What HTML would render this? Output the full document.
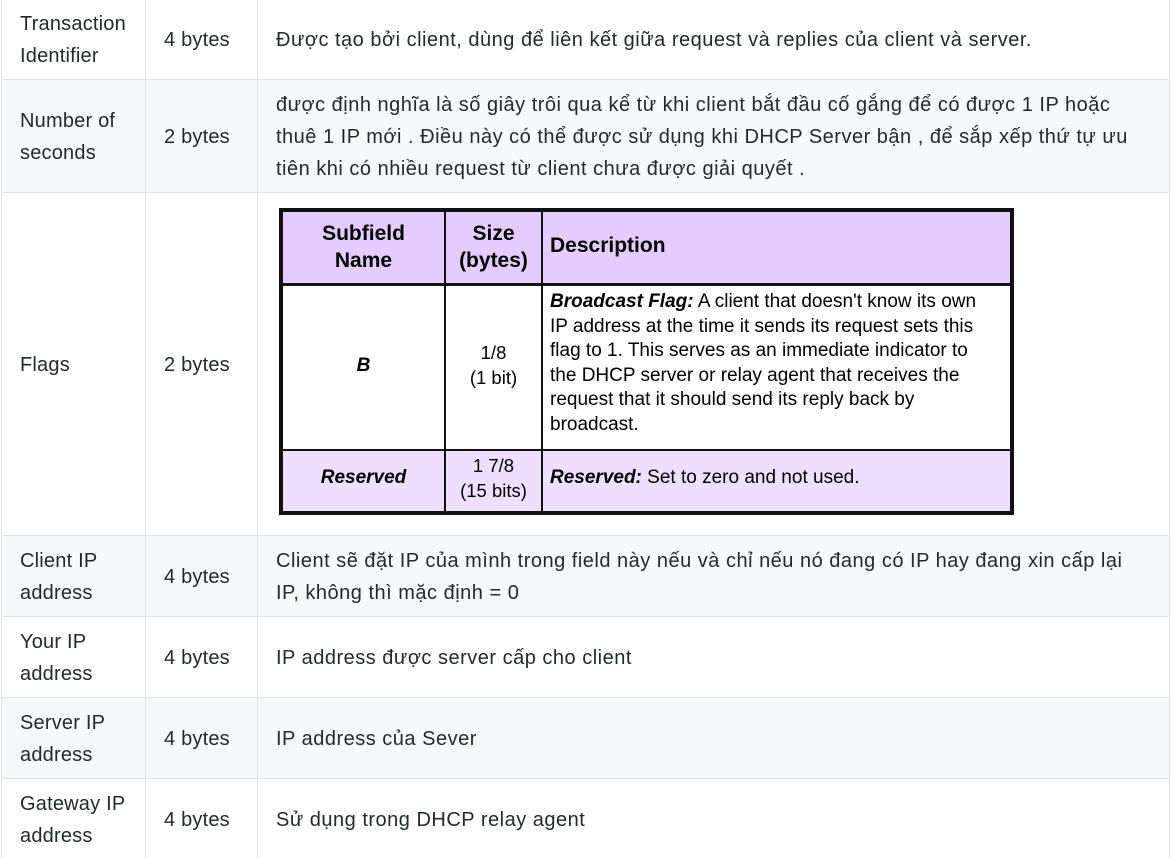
<!DOCTYPE html>
<html><head><meta charset="utf-8"><style>
*{margin:0;padding:0;box-sizing:border-box}
body{width:1171px;height:858px;background:#fff;font-family:"Liberation Sans","DejaVu Sans",sans-serif;color:#24292e;overflow:hidden;position:relative}
.r{position:absolute;left:1px;width:1169px;border-bottom:1px solid #dfe2e5}
.g{background:#f6f8fa}
.vl{position:absolute;top:0;height:858px;width:1px;background:#dfe2e5}
.c{position:absolute;font-size:20px;line-height:32px;display:flex;align-items:center;letter-spacing:0.5px}
.c1{left:20px;width:120px;letter-spacing:0.2px}.c2{left:164px;letter-spacing:0.2px}.c3{left:276px;width:865px}
#img{position:absolute;left:279px;top:208px;width:735px;height:307px;border:4px solid #111;font-family:"Liberation Sans",sans-serif;color:#000}
#img div{position:absolute}
</style></head><body>
<div class="r" style="top:0;height:80px"></div>
<div class="r g" style="top:80px;height:113px"></div>
<div class="r" style="top:193px;height:343px"></div>
<div class="r g" style="top:536px;height:81px"></div>
<div class="r" style="top:617px;height:81px"></div>
<div class="r g" style="top:698px;height:81px"></div>
<div class="r" style="top:779px;height:79px;border-bottom:none"></div>
<div class="vl" style="left:1px"></div><div class="vl" style="left:145px"></div><div class="vl" style="left:257px"></div><div class="vl" style="left:1169px"></div>

<div class="c c1" style="top:8px;height:64px">Transaction Identifier</div>
<div class="c c2" style="top:8px;height:64px">4 bytes</div>
<div class="c c3" style="top:8px;height:64px">Được tạo bởi client, dùng để liên kết giữa request và replies của client và server.</div>

<div class="c c1" style="top:89px;height:96px">Number of seconds</div>
<div class="c c2" style="top:89px;height:96px">2 bytes</div>
<div class="c c3" style="top:89px;height:96px">được định nghĩa là số giây trôi qua kể từ khi client bắt đầu cố gắng để có được 1 IP hoặc thuê 1 IP mới . Điều này có thể được sử dụng khi DHCP Server bận , để sắp xếp thứ tự ưu tiên khi có nhiều request từ client chưa được giải quyết .</div>

<div class="c c1" style="top:349px;height:32px">Flags</div>
<div class="c c2" style="top:349px;height:32px">2 bytes</div>

<div id="img">
<div style="left:0;top:0;width:727px;height:74px;background:#e5ccff;border-bottom:3px solid #111"></div>
<div style="left:0;top:237px;width:727px;height:62px;background:#eedfff;border-top:2px solid #111"></div>
<div style="left:161px;top:0;width:2px;height:299px;background:#111"></div>
<div style="left:258px;top:0;width:2px;height:299px;background:#111"></div>
<div style="left:0;top:8px;width:161px;text-align:center;font-weight:bold;font-size:21px;line-height:27px">Subfield<br>Name</div>
<div style="left:163px;top:8px;width:95px;text-align:center;font-weight:bold;font-size:21px;line-height:27px">Size<br>(bytes)</div>
<div style="left:267px;top:22px;font-weight:bold;font-size:21px">Description</div>
<div style="left:0;top:143px;width:161px;text-align:center;font-weight:bold;font-style:italic;font-size:19px">B</div>
<div style="left:163px;top:128px;width:95px;text-align:center;font-size:18.5px;line-height:25px">1/8<br>(1 bit)</div>
<div style="left:267px;top:78px;width:470px;white-space:nowrap;font-size:19px;line-height:24.6px"><b><i>Broadcast Flag:</i></b> A client that doesn't know its own<br>IP address at the time it sends its request sets this<br>flag to 1. This serves as an immediate indicator to<br>the DHCP server or relay agent that receives the<br>request that it should send its reply back by<br>broadcast.</div>
<div style="left:0;top:255px;width:161px;text-align:center;font-weight:bold;font-style:italic;font-size:19px">Reserved</div>
<div style="left:163px;top:241px;width:95px;text-align:center;font-size:18.5px;line-height:25px">1 7/8<br>(15 bits)</div>
<div style="left:267px;top:255px;font-size:19px"><b><i>Reserved:</i></b> Set to zero and not used.</div>
</div>

<div class="c c1" style="top:545px;height:64px">Client IP address</div>
<div class="c c2" style="top:545px;height:64px">4 bytes</div>
<div class="c c3" style="top:545px;height:64px">Client sẽ đặt IP của mình trong field này nếu và chỉ nếu nó đang có IP hay đang xin cấp lại IP, không thì mặc định = 0</div>

<div class="c c1" style="top:626px;height:64px">Your IP address</div>
<div class="c c2" style="top:626px;height:64px">4 bytes</div>
<div class="c c3" style="top:626px;height:64px">IP address được server cấp cho client</div>

<div class="c c1" style="top:707px;height:64px">Server IP address</div>
<div class="c c2" style="top:707px;height:64px">4 bytes</div>
<div class="c c3" style="top:707px;height:64px">IP address của Sever</div>

<div class="c c1" style="top:788px;height:64px">Gateway IP address</div>
<div class="c c2" style="top:788px;height:64px">4 bytes</div>
<div class="c c3" style="top:788px;height:64px">Sử dụng trong DHCP relay agent</div>
</body></html>
